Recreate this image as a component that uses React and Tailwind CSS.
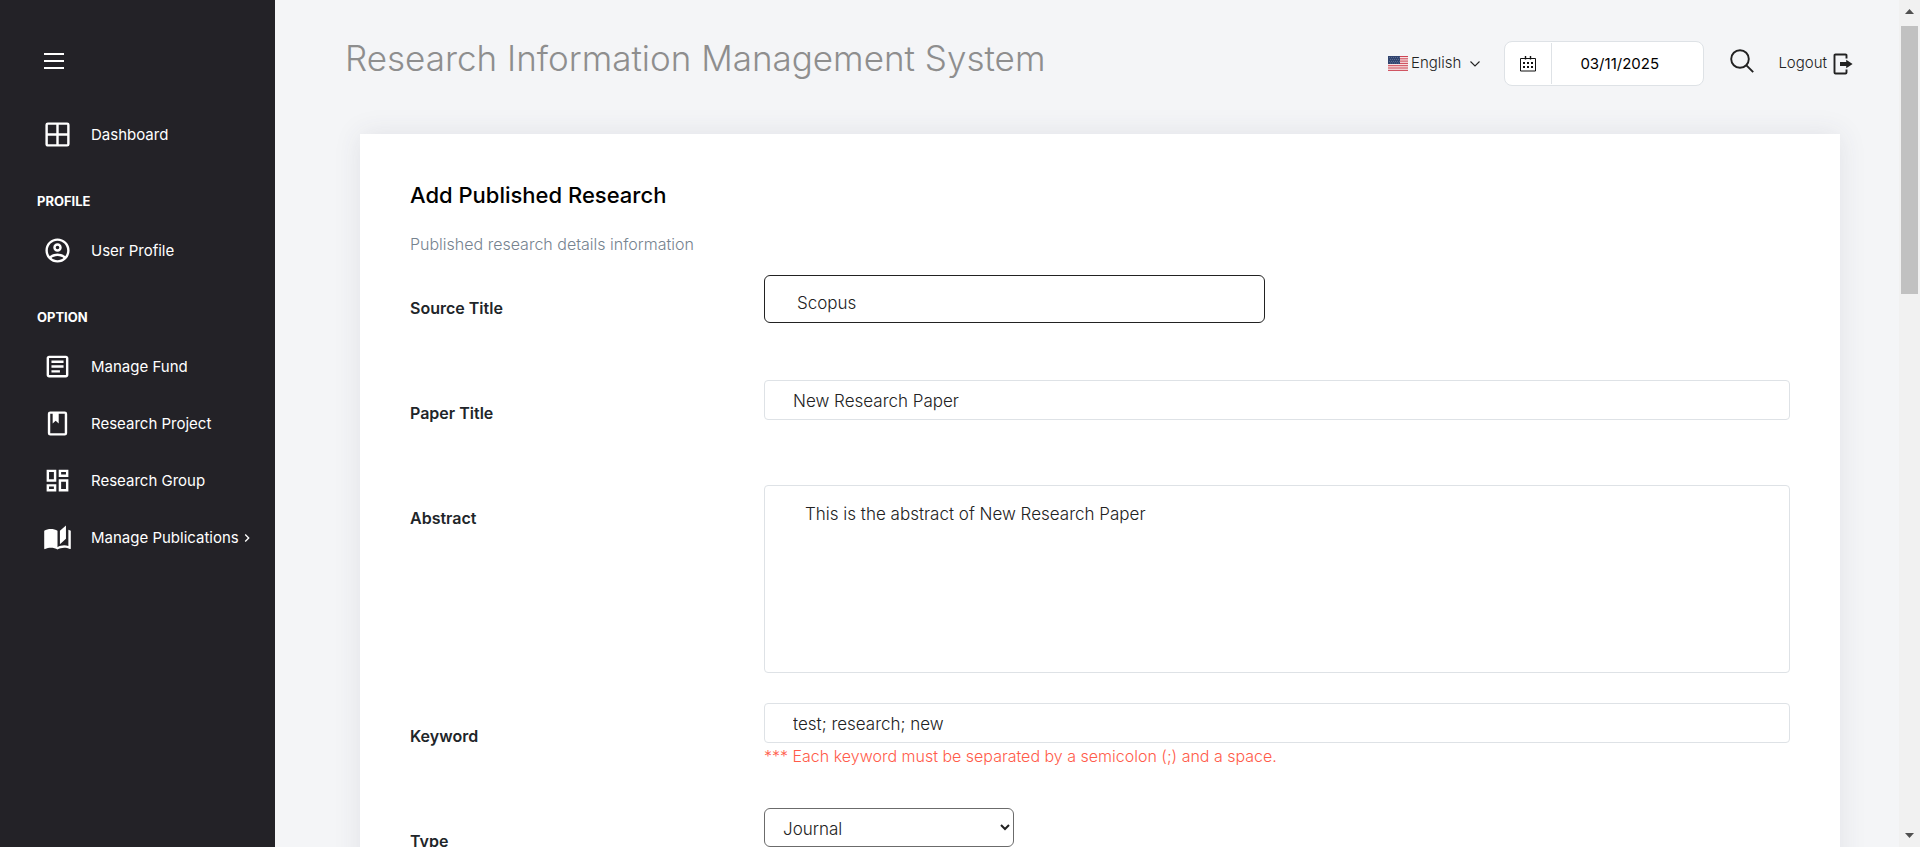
import React from 'react';

const ICONS = {
  grid: 'M4,2H20A2,2 0 0,1 22,4V20A2,2 0 0,1 20,22H4C2.92,22 2,21.1 2,20V4A2,2 0 0,1 4,2M4,4V11H11V4H4M4,20H11V13H4V20M20,20V13H13V20H20M20,4H13V11H20V4Z',
  account:
    'M12,2A10,10 0 0,0 2,12A10,10 0 0,0 12,22A10,10 0 0,0 22,12A10,10 0 0,0 12,2M7.07,18.28C7.5,17.38 10.12,16.5 12,16.5C13.88,16.5 16.5,17.38 16.93,18.28C15.57,19.36 13.86,20 12,20C10.14,20 8.43,19.36 7.07,18.28M18.36,16.83C16.93,15.09 13.46,14.5 12,14.5C10.54,14.5 7.07,15.09 5.64,16.83C4.62,15.5 4,13.82 4,12C4,7.59 7.59,4 12,4C16.41,4 20,7.59 20,12C20,13.82 19.38,15.5 18.36,16.83M12,6C10.06,6 8.5,7.56 8.5,9.5C8.5,11.44 10.06,13 12,13C13.94,13 15.5,11.44 15.5,9.5C15.5,7.56 13.94,6 12,6M12,11A1.5,1.5 0 0,1 10.5,9.5A1.5,1.5 0 0,1 12,8A1.5,1.5 0 0,1 13.5,9.5A1.5,1.5 0 0,1 12,11Z',
  textBox:
    'M5,3C3.89,3 3,3.89 3,5V19C3,20.11 3.89,21 5,21H19C20.11,21 21,20.11 21,19V5C21,3.89 20.11,3 19,3H5M5,5H19V19H5V5M7,7V9H17V7H7M7,11V13H17V11H7M7,15V17H14V15H7Z',
  book: 'M18,2A2,2 0 0,1 20,4V20A2,2 0 0,1 18,22H6A2,2 0 0,1 4,20V4A2,2 0 0,1 6,2H18M18,4H13V12L10.5,9.75L8,12V4H6V20H18V4Z',
  tiles:
    'M19,5V7H15V5H19M9,5V11H5V5H9M19,13V19H15V13H19M9,17V19H5V17H9M21,3H13V9H21V3M11,3H3V13H11V3M21,11H13V21H21V11M11,15H3V21H11V15Z',
  openBook:
    'M19 2L14 6.5V17.5L19 13V2M6.5 5C4.55 5 2.45 5.4 1 6.5V21.16C1 21.41 1.25 21.66 1.5 21.66C1.6 21.66 1.65 21.59 1.75 21.59C3.1 20.94 5.05 20.5 6.5 20.5C8.45 20.5 10.55 20.9 12 22C13.35 21.15 15.8 20.5 17.5 20.5C19.15 20.5 20.85 20.81 22.25 21.56C22.35 21.61 22.4 21.59 22.5 21.59C22.75 21.59 23 21.34 23 21.09V6.5C22.4 6.05 21.75 5.75 21 5.5V19C19.9 18.65 18.7 18.5 17.5 18.5C15.8 18.5 13.35 19.15 12 20V6.5C10.55 5.4 8.45 5 6.5 5Z',
};

function NavItem({ icon, label, arrow }) {
  return (
    <a href="#" className="flex h-[57px] items-center pl-[43px] text-[15px] text-white">
      <svg viewBox="0 0 24 24" className="size-[29px] shrink-0 fill-current" aria-hidden="true">
        <path d={ICONS[icon]} />
      </svg>
      <span className="ml-[19px] pt-0.5 whitespace-nowrap">{label}</span>
      {arrow && (
        <svg viewBox="0 0 24 24" className="size-4 fill-current" aria-hidden="true">
          <path d="M8.59,16.58L13.17,12L8.59,7.41L10,6L16,12L10,18L8.59,16.58Z" />
        </svg>
      )}
    </a>
  );
}

function NavHeading({ children }) {
  return <h2 className="flex h-[59px] items-center pt-[19px] pl-[37px] text-[13px] font-bold text-white">{children}</h2>;
}

function Sidebar() {
  return (
    <nav className="w-[275px] shrink-0 bg-[#232227] pt-10">
      <button type="button" aria-label="Toggle menu" className="ml-11 flex h-[42px] items-center text-white">
        <svg viewBox="0 0 20 16" className="h-4 w-5" fill="none" stroke="currentColor" strokeWidth="2" aria-hidden="true">
          <path d="M0 1H20M0 8H20M0 15H20" />
        </svg>
      </button>
      <div className="mt-6">
        <NavItem icon="grid" label="Dashboard" />
        <NavHeading>PROFILE</NavHeading>
        <NavItem icon="account" label="User Profile" />
        <NavHeading>OPTION</NavHeading>
        <NavItem icon="textBox" label="Manage Fund" />
        <NavItem icon="book" label="Research Project" />
        <NavItem icon="tiles" label="Research Group" />
        <NavItem icon="openBook" label="Manage Publications" arrow />
      </div>
    </nav>
  );
}

function Flag() {
  return (
    <svg viewBox="0 0 20 15" className="h-[15px] w-5" aria-hidden="true">
      <rect width="20" height="15" fill="#f6dfe1" />
      <path d="M0 .5H20M0 2.8H20M0 5.1H20M0 7.4H20M0 9.7H20M0 12H20M0 14.4H20" stroke="#cc4453" strokeWidth="1" />
      <rect width="12" height="8" fill="#30446f" />
      <path d="M1 1.5H12M2 3.5H12M1 5.5H12M2 7H12" stroke="#7d8bab" strokeWidth=".7" strokeDasharray=".8 1.2" />
    </svg>
  );
}

function Header() {
  return (
    <header className="flex h-[134px] items-start justify-between pr-[46px] pl-[70px]">
      <h1 className="pt-9 text-[35px] leading-[44px] font-light whitespace-nowrap text-[#8e8e8e]">
        Research Information Management System
      </h1>
      <div className="flex items-center pt-[41px] text-[15px] text-[#222]">
        <button type="button" className="flex items-center gap-[3px] font-light">
          <Flag />
          English
          <svg viewBox="0 0 10 6" className="ml-1.5 h-1.5 w-2.5" fill="none" stroke="currentColor" strokeWidth="1.1" aria-hidden="true">
            <path d="M.5 .5L5 5L9.500 .5" />
          </svg>
        </button>
        <div className="ml-6 flex h-[45px] w-[200px] items-stretch rounded-lg border border-[#dee2e6] bg-white">
          <span className="my-px flex w-[47px] shrink-0 items-center justify-center border-r border-[#dee2e6]">
            <svg viewBox="0 0 16 16" className="size-4" fill="none" stroke="#111" aria-hidden="true">
              <path d="M.5 2.5H15.5V15H.5Z" />
              <path d="M5.500 0V3.500M10.500 0V3.500" strokeWidth="1.400" />
              <path d="M3 7H13M3 11H13" strokeWidth="1.800" strokeDasharray="2 2" />
            </svg>
          </span>
          <input aria-label="Date" defaultValue="03/11/2025" className="w-full min-w-0 pt-0.5 pl-7 text-[15px] text-black outline-none" />
        </div>
        <button type="button" aria-label="Search" className="ml-[26px] -mt-1.5">
          <svg viewBox="0 0 24 24" className="size-6" fill="none" stroke="currentColor" strokeWidth="1.9" aria-hidden="true">
            <circle cx="10" cy="10" r="8.800" />
            <path d="M16.200 16.200L23.200 23.200" />
          </svg>
        </button>
        <a href="#" className="ml-6 flex items-center gap-[6px] font-light">
          Logout
          <svg viewBox="0 0 20 22" className="h-[22px] w-5" aria-hidden="true">
            <path
              d="M13.500 5.500V2.500Q13.500 1.500 12.500 1.500H2.500Q1.500 1.500 1.500 2.500V19.500Q1.500 20.500 2.500 20.500H12.500Q13.500 20.500 13.500 19.500V16.500"
              fill="none"
              stroke="#222"
              strokeWidth="1.900"
            />
            <path d="M7 9H13.200V6.800L19.600 11L13.200 15.200V13H7Z" fill="#222" />
          </svg>
        </a>
      </div>
    </header>
  );
}

function Field({ id, label, children }) {
  return (
    <div className="grid min-h-[75px] grid-cols-[354px_1fr] items-start">
      <label htmlFor={id} className="pt-[21px] text-[16px] leading-6 font-semibold text-[#212529]">
        {label}
      </label>
      <div>{children}</div>
    </div>
  );
}

const inputClass =
  'block h-10 w-full rounded-[4px] border border-[#dee2e6] bg-white px-7 pt-0.5 text-[17px] font-light text-[#222] outline-none';

function ResearchForm() {
  return (
    <form className="mr-[59px] ml-[85px] bg-white px-[50px] pt-[47px] pb-12 shadow-[0_0_26px_rgba(60,60,90,0.10)]">
      <h2 className="text-[22px] leading-7 font-medium text-black">Add Published Research</h2>
      <p className="mt-[23px] text-[16px] leading-6 font-light text-[#76838f]">Published research details information</p>
      <div className="mt-[19px] flex flex-col gap-[30px]">
        <Field id="source" label="Source Title">
          <input
            id="source"
            defaultValue="Scopus"
            className="block h-12 w-[501px] rounded-md border border-[#222] bg-white px-8 pt-2 text-[17px] font-light text-[#222] outline-none"
          />
        </Field>
        <Field id="paper" label="Paper Title">
          <input id="paper" defaultValue="New Research Paper" className={inputClass} />
        </Field>
        <Field id="abstract" label="Abstract">
          <textarea
            id="abstract"
            defaultValue="This is the abstract of New Research Paper"
            className="block h-[188px] w-full resize-none rounded-[4px] border border-[#dee2e6] bg-white px-10 py-4 text-[17px] leading-6 font-light text-[#222] outline-none"
          />
        </Field>
        <Field id="keyword" label="Keyword">
          <input id="keyword" defaultValue="test; research; new" className={inputClass} />
          <p className="text-[16px] leading-[26px] font-light text-[#ff5b4a]">
            *** Each keyword must be separated by a semicolon (;) and a space.
          </p>
        </Field>
        <Field id="type" label="Type">
          <select
            id="type"
            defaultValue="Journal"
            className="block h-[39px] w-[250px] rounded-md border border-[#6b6b6b] bg-white px-3.5 pt-0.5 text-[17px] font-light text-[#222]"
          >
            <option>Journal</option>
            <option>Conference Proceeding</option>
            <option>Book</option>
          </select>
        </Field>
      </div>
    </form>
  );
}

function ScrollTrack() {
  return (
    <div className="flex w-[21px] shrink-0 flex-col bg-[#f1f1f1] px-0.5" aria-hidden="true">
      <svg viewBox="0 0 17 26" className="h-[26px] w-full">
        <path d="M4 14L8.500 9L13 14Z" fill="#505050" />
      </svg>
      <div className="h-[268px] bg-[#c1c1c1]" />
      <svg viewBox="0 0 17 26" className="mt-auto h-[26px] w-full">
        <path d="M4 12L8.500 17L13 12Z" fill="#505050" />
      </svg>
    </div>
  );
}

export default function App() {
  return (
    <div className="flex h-screen overflow-hidden bg-[#f4f5f7] font-['Inter',sans-serif]">
      <Sidebar />
      <main className="min-w-0 flex-1 overflow-hidden">
        <Header />
        <ResearchForm />
      </main>
      <ScrollTrack />
    </div>
  );
}
